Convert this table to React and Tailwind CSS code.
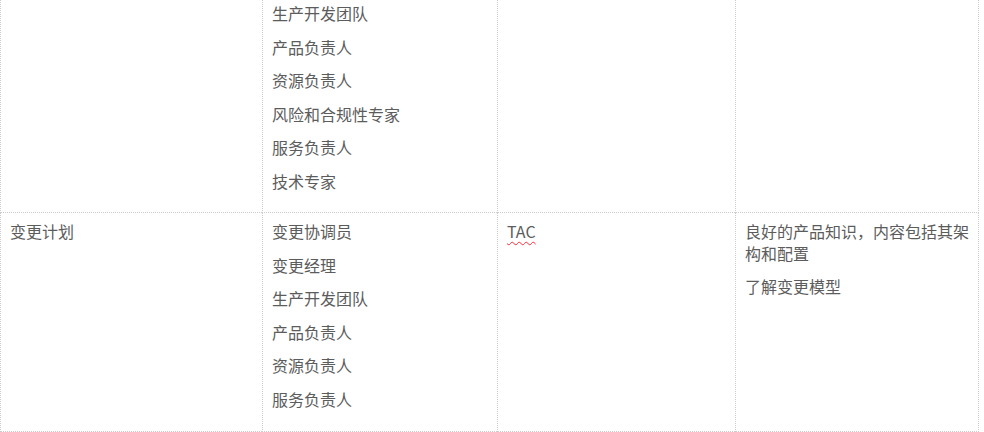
const rows = [
  {
    top: true,
    activity: '',
    roles: ['生产开发团队', '产品负责人', '资源负责人', '风险和合规性专家', '服务负责人', '技术专家'],
    tools: [],
    skills: [],
  },
  {
    activity: '变更计划',
    roles: ['变更协调员', '变更经理', '生产开发团队', '产品负责人', '资源负责人', '服务负责人'],
    tools: ['TAC'],
    skills: ['良好的产品知识，内容包括其架构和配置', '了解变更模型'],
  },
];

const Item = ({ children, spell }) => (
  <p className="mb-3 leading-[21.5px]">
    {spell ? (
      <span className="underline decoration-wavy decoration-red-500 decoration-1 underline-offset-[3px]">
        {children}
      </span>
    ) : (
      children
    )}
  </p>
);

export default function App() {
  return (
    <div
      className="w-[979px] bg-white text-[16px] text-[#5c5c5c]"
      style={{ fontFamily: '"Microsoft YaHei", "Noto Sans CJK SC", sans-serif' }}>
      {rows.map((row, i) => {
        const pad = row.top ? 'pt-[3px] pb-2' : 'pt-2 pb-[9px]';
        const cell = `border-l border-b border-dotted border-[#cccccc] pl-[9px] pr-2 ${pad}`;
        return (
          <div key={i} className="grid grid-cols-[262px_235px_238px_244px]">
            <div className={cell}>{row.activity && <Item>{row.activity}</Item>}</div>
            <div className={cell}>
              {row.roles.map((r) => (
                <Item key={r}>{r}</Item>
              ))}
            </div>
            <div className={cell}>
              {row.tools.map((t) => (
                <Item key={t} spell>
                  {t}
                </Item>
              ))}
            </div>
            <div className={`${cell} border-r`}>
              {row.skills.map((s) => (
                <Item key={s}>{s}</Item>
              ))}
            </div>
          </div>
        );
      })}
    </div>
  );
}
